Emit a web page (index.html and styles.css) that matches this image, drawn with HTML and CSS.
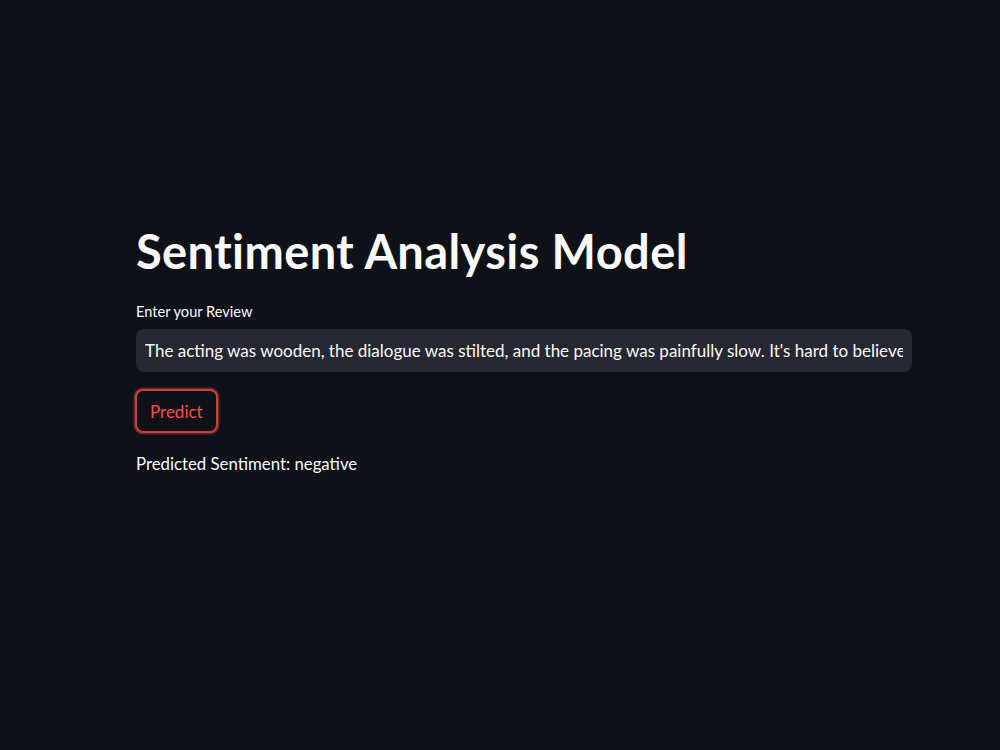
FILE: index.html
```html
<!DOCTYPE html>
<html lang="en">
<head>
  <meta charset="UTF-8" />
  <meta name="viewport" content="width=device-width, initial-scale=1.0"/>
  <title>Sentiment Analysis</title>
  <link rel="stylesheet" href="styles.css">
</head>
<body>

  <main class="block">
    <h1>Sentiment Analysis Model</h1>

    <label class="field-label" for="review">Enter your Review</label>
    <div class="field">
      <input type="text" id="review" value="The acting was wooden, the dialogue was stilted, and the pacing was painfully slow. It's hard to believe this movie got made." />
    </div>

    <button type="button" class="btn">Predict</button>

    <p class="result">Predicted Sentiment: negative</p>
  </main>

</body>
</html>
```

FILE: styles.css
```css
* {
  box-sizing: border-box;
}

body {
  font-family: Lato, "Noto Sans", sans-serif;
  background-color: #0e1117;
  color: #fafafa;
  margin: 0;
}

.block {
  width: 776px;
  margin: 0 0 0 136px;
  padding-top: 221px;
  display: flex;
  flex-direction: column;
  align-items: flex-start;
}

h1 {
  font-size: 47px;
  font-weight: 700;
  margin: 0 0 22px;
  line-height: 60px;
  letter-spacing: 0.4px;
}

.field-label {
  font-size: 14.6px;
  margin-bottom: 9px;
}

.field {
  width: 100%;
  background: #262730;
  border-radius: 8px;
  height: 43px;
  overflow: hidden;
}

.field input {
  width: 100%;
  height: 100%;
  background: transparent;
  border: none;
  outline: none;
  color: #fafafa;
  font-family: inherit;
  font-size: 17px;
  padding: 0 9px;
}

.btn {
  margin-top: 17px;
  margin-left: -1px;
  height: 44px;
  padding: 0 13px;
  background: #0e1117;
  border: 2px solid #c94243;
  box-shadow: 0 0 0 1.5px rgba(255, 75, 75, 0.35);
  border-radius: 8px;
  color: #ff4b4b;
  font-family: inherit;
  font-size: 17px;
  cursor: pointer;
}

.result {
  margin: 20px 0 0;
  font-size: 16.8px;
}
```
